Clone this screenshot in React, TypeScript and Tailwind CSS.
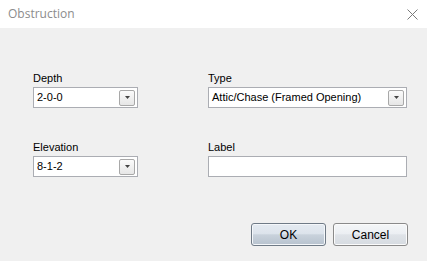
import { ReactNode } from 'react';

const font = { fontFamily: '"Liberation Sans", Arial, sans-serif' };

function Combo({ value, width }: { value: string; width: string }) {
  return (
    <div className={`${width} h-[21px] bg-white border border-[#abadb3] flex items-center justify-between pl-[3px] pr-[2px]`}>
      <span className="text-[11px] text-black leading-none">{value}</span>
      <div className="w-[16px] h-[16px] rounded-[2px] border border-[#a8a8a8] bg-[linear-gradient(#fbfbfb,#e6e6e6)] flex items-center justify-center">
        <svg width="5" height="3" viewBox="0 0 5 3">
          <path d="M0 0h5L2.5 3z" fill="#444" />
        </svg>
      </div>
    </div>
  );
}

function Field({ label, children }: { label: string; children: ReactNode }) {
  return (
    <div className="flex flex-col">
      <span className="text-[11px] leading-[13px] text-black mb-[2px]">{label}</span>
      {children}
    </div>
  );
}

export default function App() {
  return (
    <div className="w-[427px] h-[261px] flex flex-col bg-[#f0f0f0] overflow-hidden" style={font}>
      {/* Title bar */}
      <div className="h-[28px] bg-white flex items-center justify-between pl-[8px] pr-[9px] shrink-0">
        <span className="text-[12px] text-[#8c8c8c]" style={{ fontFamily: '"Open Sans", "Noto Sans", sans-serif' }}>
          Obstruction
        </span>
        <svg width="11" height="11" viewBox="0 0 11 11">
          <path d="M0.5 0.5L10.5 10.5M10.5 0.5L0.5 10.5" stroke="#7a7a7a" strokeWidth="1" />
        </svg>
      </div>

      {/* Body */}
      <div className="pt-[44px] pl-[33px] grid grid-cols-[105px_199px] gap-x-[70px] gap-y-[33px]">
        <Field label="Depth">
          <Combo value="2-0-0" width="w-[105px]" />
        </Field>
        <Field label="Type">
          <Combo value="Attic/Chase (Framed Opening)" width="w-[199px]" />
        </Field>
        <Field label="Elevation">
          <Combo value="8-1-2" width="w-[105px]" />
        </Field>
        <Field label="Label">
          <div className="w-[199px] h-[21px] bg-white border border-[#abadb3]" />
        </Field>
      </div>

      {/* Buttons */}
      <div className="mt-[46px] flex justify-end gap-[7px] pr-[19px]">
        <button className="w-[75px] h-[23px] rounded-[3px] border border-[#6f7a86] bg-[linear-gradient(#e4eaf1_0%,#dde4ec_45%,#c9d2dc_52%,#b7c2ce_100%)] text-[12px] text-black shadow-[inset_0_0_0_1px_#f4f7fa]">
          OK
        </button>
        <button className="w-[75px] h-[23px] rounded-[3px] border border-[#8a8a8a] bg-[linear-gradient(#f4f6f8_0%,#eceff3_45%,#dfe3e8_52%,#d6dbe1_100%)] text-[12px] text-black shadow-[inset_0_0_0_1px_#fbfbfb]">
          Cancel
        </button>
      </div>
    </div>
  );
}
